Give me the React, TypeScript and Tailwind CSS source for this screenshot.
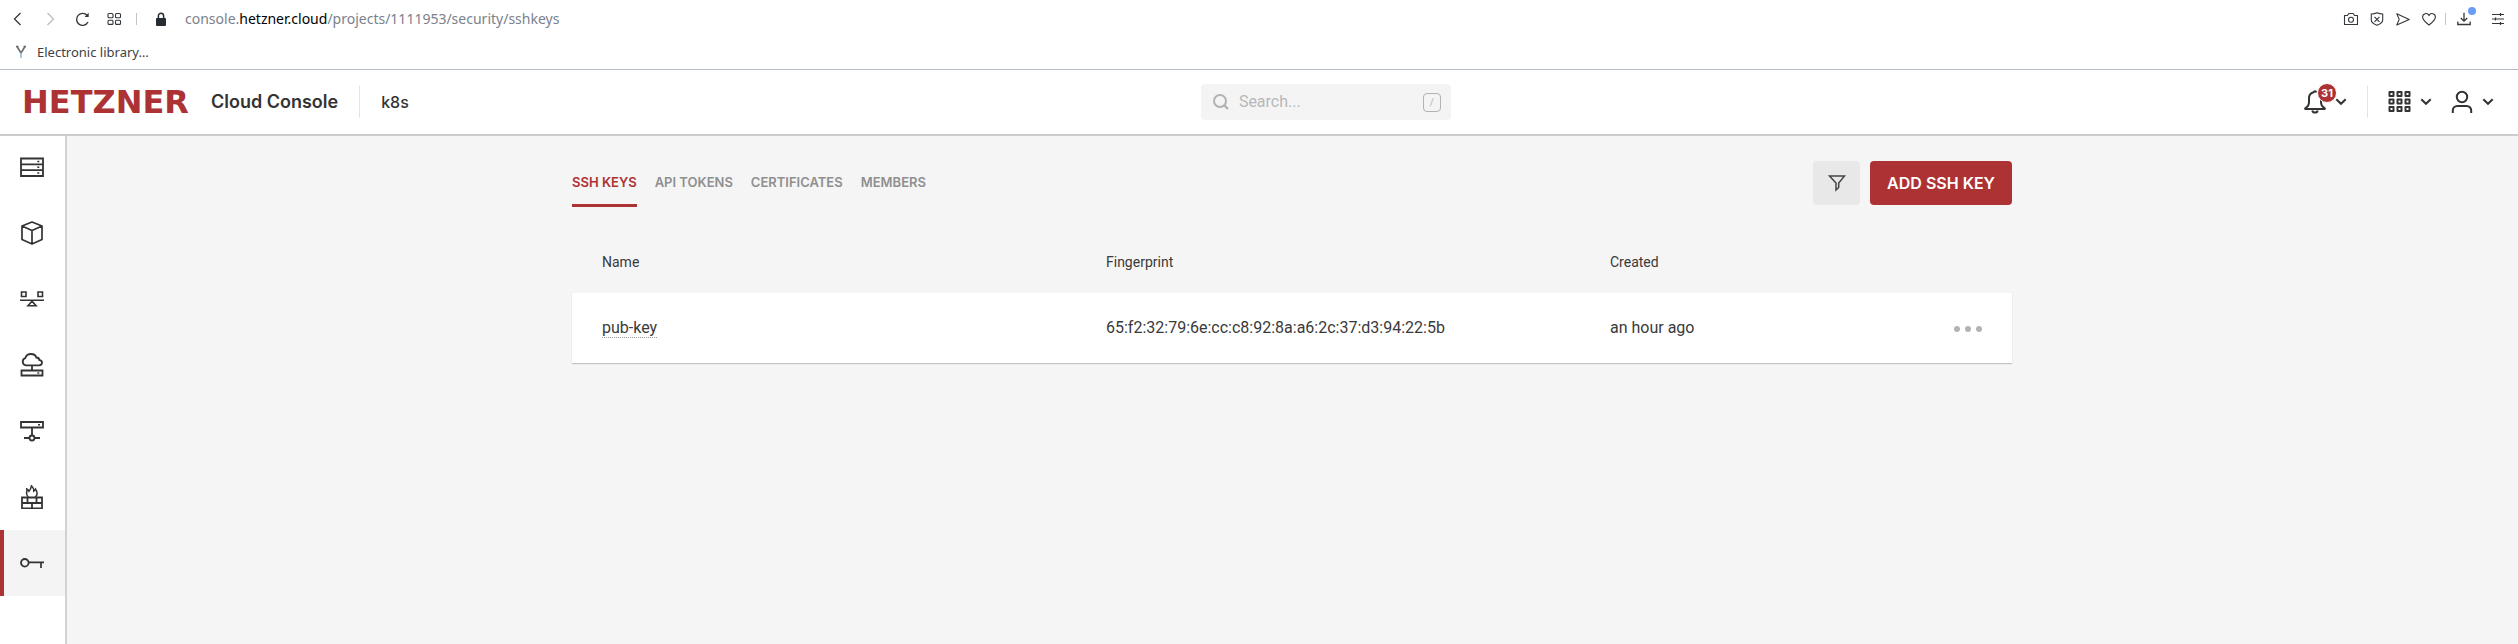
import type { ReactNode } from "react";

const ROBOTO = "font-[Roboto,sans-serif]";

function Icon({ size = 24, label, stroke = 2, children }: { size?: number; label?: string; stroke?: number; children: ReactNode }) {
  return (
    <svg
      width={size}
      height={size}
      viewBox={`0 0 ${size} ${size}`}
      fill="none"
      stroke="currentColor"
      strokeWidth={stroke}
      aria-hidden={label ? undefined : true}
      aria-label={label}
      className="block shrink-0"
    >
      {children}
    </svg>
  );
}

function Chevron() {
  return (
    <Icon size={12}>
      <path d="M1.3 3.2 6 7.8l4.7-4.6" />
    </Icon>
  );
}

function BrowserButton({ label, children, muted }: { label: string; children: ReactNode; muted?: boolean }) {
  return (
    <button type="button" aria-label={label} className={muted ? "text-[#bdbdbd]" : "text-[#33383d]"}>
      {children}
    </button>
  );
}

function BrowserChrome() {
  return (
    <div className="border-b border-[#b5bec8] bg-white font-['Noto_Sans','Open_Sans',sans-serif]">
      <div className="flex h-[38px] items-center justify-between pr-3 pl-[10px]">
        <div className="flex items-center">
          <div className="flex items-center gap-4">
            <BrowserButton label="Back">
              <Icon size={16} stroke={1.3}>
                <path d="M10.5 2 4.5 8l6 6" />
              </Icon>
            </BrowserButton>
            <BrowserButton label="Forward" muted>
              <Icon size={16} stroke={1.3}>
                <path d="m5.500 2 6 6-6 6" />
              </Icon>
            </BrowserButton>
            <BrowserButton label="Reload">
              <Icon size={16} stroke={1.4}>
                <path d="M14 11A6 6 0 1 1 13.200 4.500" />
                <path d="M14.700 1.800v4.200H10.500z" fill="currentColor" stroke="none" />
              </Icon>
            </BrowserButton>
            <BrowserButton label="Tab overview">
              <Icon size={16} stroke={1.1}>
                <rect x="2" y="2.500" width="5" height="4.200" rx="1" />
                <rect x="9.500" y="2.500" width="5" height="4.200" rx="1" />
                <rect x="2" y="9.200" width="5" height="4.200" rx="1" />
                <rect x="9.500" y="9.200" width="5" height="4.200" rx="1" />
              </Icon>
            </BrowserButton>
          </div>
          <span className="ml-[14px] h-3 w-px bg-[#c4c4c4]" />
          <span className="ml-4 text-[#262c33]">
            <Icon size={16}>
              <rect x="3" y="7" width="10" height="8" rx="1" fill="currentColor" stroke="none" />
              <path d="M5.400 8V4.800a2.600 2.600 0 0 1 5.200 0V8" strokeWidth="1.500" />
            </Icon>
          </span>
          <span className="ml-4 text-sm text-[#7b818c]">
            console.<span className="text-black">hetzner.cloud</span>/projects/1111953/security/sshkeys
          </span>
        </div>
        <div className="flex items-center gap-[10px]">
          <BrowserButton label="Snapshot">
            <Icon size={16} stroke={1.1}>
              <path d="M1.500 4.500h3l1.300-2h4.400l1.300 2h3v9h-13z" strokeLinejoin="round" />
              <circle cx="8" cy="8.700" r="2.500" />
            </Icon>
          </BrowserButton>
          <BrowserButton label="Ad blocker">
            <Icon size={16} stroke={1.100}>
              <path d="M8 1.800c2 1 4 1.200 5.700 1.200v6c0 2.300-2.500 4-5.700 5.200C4.800 13 2.300 11.300 2.300 9V3C4 3 6 2.800 8 1.800z" />
              <path d="m5.500 5.800 5 5m0-5-5 5" />
            </Icon>
          </BrowserButton>
          <BrowserButton label="Send">
            <Icon size={16} stroke={1.100}>
              <path d="m1.800 2.800 12.400 5.600L1.800 14l2.400-5.600z" strokeLinejoin="round" />
            </Icon>
          </BrowserButton>
          <BrowserButton label="Favourites">
            <Icon size={16} stroke={1.100}>
              <path d="M8 14C4.500 11.400 1.600 9 1.600 6a3.400 3.400 0 0 1 6.400-1.600A3.400 3.400 0 0 1 14.400 6c0 3-2.900 5.400-6.400 8z" />
            </Icon>
          </BrowserButton>
          <span className="-mx-[2px] h-3 w-px bg-[#c4c4c4]" />
          <span className="relative mr-2 ml-[2px] flex">
            <BrowserButton label="Downloads">
              <Icon size={16} stroke={1.300}>
                <path d="M8 1.800v8M4.800 7 8 10.200 11.200 7M1.800 10.500v3h12.400v-3" />
              </Icon>
            </BrowserButton>
            <span className="absolute -top-1 -right-1 size-2 rounded-full bg-[#6a9bf8]" />
          </span>
          <BrowserButton label="Easy setup">
            <Icon size={16} stroke={1.200}>
              <path d="M2 3.500h12M2 8h12M2 12.500h12M10.500 2v3M5.500 6.500v3M10.500 11v3" />
            </Icon>
          </BrowserButton>
        </div>
      </div>
      <div className="flex h-[31px] items-start pt-1 pl-[13px]">
        <a href="#library" className="flex items-center gap-2 text-[13px] leading-5 text-[#3d4247]">
          <Icon size={16} stroke={1.500}>
            <path d="M4 2.500 8 9l4-6.500M3 2.500h2.500M10.500 2.500H13" stroke="#666" />
            <path d="M8 8.500V14" stroke="#8ab8d6" />
          </Icon>
          Electronic library…
        </a>
      </div>
    </div>
  );
}

function Header() {
  return (
    <header className="relative z-10 flex h-16 items-center justify-between bg-white pr-6 pl-[22px] text-[#333] shadow-[0_2px_0_#cccccc]">
      <div className="flex items-center font-[Inter,sans-serif]">
        <a href="#home" className="flex items-center gap-[22px]">
          <span className="font-['DejaVu_Sans',sans-serif] text-[32px] leading-8 font-bold text-[#ad3234]">HETZNER</span>
          <span className="text-lg font-semibold">Cloud Console</span>
        </a>
        <span className="ml-[21px] h-8 w-px bg-[#e3e3e3]" />
        <a href="#project" className="ml-[21px] text-base font-medium">
          k8s
        </a>
      </div>

      <label className={`flex h-9 w-[250px] items-center rounded bg-[#f4f4f4] pr-[10px] pl-3 text-[#b3b3b3] ${ROBOTO}`}>
        <Icon size={16}>
          <circle cx="7" cy="7" r="6" />
          <path d="m11.300 11.300 3.700 3.700" strokeWidth="2.400" />
        </Icon>
        <input
          type="text"
          aria-label="Search"
          placeholder="Search..."
          className="ml-[10px] min-w-0 flex-1 bg-transparent text-base text-[#333] outline-none placeholder:text-[#b8b8b8]"
        />
        <kbd className={`flex h-[19px] w-[18px] items-center justify-center rounded-[4px] border border-[#b3b3b3] text-[10px] ${ROBOTO}`}>/</kbd>
      </label>

      <div className="flex items-center pl-[60px]">
        <button type="button" aria-label="Notifications, 31 unread" className="relative flex items-center gap-2">
          <Icon>
            <path d="M13.500 2.300a1.600 1.600 0 0 0-3 0c-3 .8-4.500 3-4.500 6v4c0 2.600-1.300 4.600-3.800 6v.7h19.600v-.7c-2.500-1.400-3.800-3.400-3.800-6V9" strokeLinejoin="round" />
            <path d="M9.300 20.500c.3 1.400 1.300 2.100 2.700 2.100s2.400-.7 2.700-2.100" />
          </Icon>
          <Chevron />
          <span className="absolute -top-[7px] left-[14px] flex size-5 items-center justify-center rounded-full border border-white bg-[#ad3234] font-[Inter,sans-serif] text-[11px] font-bold text-white">
            31
          </span>
        </button>
        <span className="ml-5 h-8 w-px bg-[#e3e3e3]" />
        <button type="button" aria-label="Products" className="ml-5 flex items-center gap-2">
          <Icon>
            <path d="M1.500 2h4v4h-4zM9.500 2h4v4h-4zM17.500 2h4v4h-4zM1.500 9.500h4v4h-4zM9.500 9.500h4v4h-4zM17.500 9.500h4v4h-4zM1.500 17h4v4h-4zM9.500 17h4v4h-4zM17.500 17h4v4h-4z" strokeLinejoin="round" />
          </Icon>
          <Chevron />
        </button>
        <button type="button" aria-label="Account" className="ml-[18px] flex items-center gap-2">
          <Icon>
            <circle cx="12" cy="7" r="5.200" />
            <path d="M2.800 23v-2.500a4.500 4.500 0 0 1 4.500-4.500h9.400a4.500 4.500 0 0 1 4.500 4.500V23" />
          </Icon>
          <Chevron />
        </button>
      </div>
    </header>
  );
}

const navItems: { label: string; active?: boolean; icon: ReactNode }[] = [
  {
    label: "Servers",
    icon: (
      <>
        <path d="M1 3.500h22v17.500H1zM1 9.300h22M1 15.200h22" strokeWidth="1.800" />
        <path d="M17.300 6.400h2M17.300 12.200h2M17.300 18.100h2" strokeWidth="1.500" />
      </>
    ),
  },
  {
    label: "Volumes",
    icon: <path d="M12 1 22 5v13.500L12 23 2 18.500V5zM2 5l10 4.500L22 5M12 9.500V23" strokeWidth="1.700" strokeLinejoin="round" />,
  },
  {
    label: "Load balancers",
    icon: (
      <>
        <path d="M1.500 5h4.500v4.500H1.500zM18 5h4.500v4.500H18z" strokeWidth="1.600" />
        <path d="M0 13.200h24M12 14.300 8 18.700h8z" strokeWidth="1.600" />
      </>
    ),
  },
  {
    label: "Floating IPs",
    icon: (
      <>
        <path d="M6 12.300a3.700 3.700 0 0 1-.7-7.200C6 2.500 8 1 11 1c2.800 0 4.700 1.400 5.300 3.500 2 0 2.800.8 2.900 2.400 1.800.4 2.800 1.300 2.800 2.600 0 1.700-1.200 2.800-3 2.800z" strokeWidth="1.800" />
        <path d="M12 12.500V17M1.500 17.500h21v5h-21z" strokeWidth="1.800" />
        <path d="M17.300 20h2" strokeWidth="1.400" />
      </>
    ),
  },
  {
    label: "Networks",
    icon: (
      <>
        <path d="M1 3h22v5.500H1zM12 8.500V16M4 19h5M15 19h5" strokeWidth="1.800" />
        <circle cx="12" cy="19" r="2.500" strokeWidth="1.800" />
        <path d="M18 5.700h2" strokeWidth="1.400" />
      </>
    ),
  },
  {
    label: "Firewalls",
    icon: (
      <>
        <path d="M2 12.500h20v11H2zM2 18h20M7.500 12.500V18M16.500 12.500V18M12 18v5.500" strokeWidth="1.800" />
        <path d="M8.300 12C6.700 10.500 6.200 9 6.700 7c.3-1.300.3-2 .1-3 1.200.6 1.900 1.300 2.200 2.300C10.500 4.500 11 3 11.500.8c1.500 1.500 2.300 3.300 2.300 5.400.8-.5 1.200-1.200 1.600-2.200 1.700 2.500 2.500 6-.2 8" strokeWidth="1.500" />
      </>
    ),
  },
  {
    label: "Security",
    active: true,
    icon: (
      <>
        <circle cx="4.800" cy="11.800" r="3.800" strokeWidth="1.800" />
        <path d="M9 11.300h15M21 11.300v5.700" strokeWidth="1.700" />
      </>
    ),
  },
];

function Sidebar() {
  return (
    <nav aria-label="Project" className="w-[67px] shrink-0 border-r-2 border-[#d2d2d2] bg-white text-[#333]">
      {navItems.map((item) => (
        <a
          key={item.label}
          href={`#${item.label.toLowerCase().replace(" ", "-")}`}
          aria-label={item.label}
          aria-current={item.active ? "page" : undefined}
          className={`flex h-[66px] items-center border-l-4 pl-4 ${item.active ? "border-[#ad3234] bg-[#f4f4f4]" : "border-transparent"}`}
        >
          <Icon>{item.icon}</Icon>
        </a>
      ))}
    </nav>
  );
}

const tabs = ["SSH KEYS", "API TOKENS", "CERTIFICATES", "MEMBERS"];

function Toolbar() {
  return (
    <div className="flex items-start justify-between font-[Inter,sans-serif]">
      <nav aria-label="Security" className="flex gap-[18px] pt-[11px]">
        {tabs.map((tab, i) => (
          <a
            key={tab}
            href={`#${tab.toLowerCase().replace(" ", "-")}`}
            aria-current={i === 0 ? "page" : undefined}
            className={`border-b-[3px] pb-3 text-[13px] leading-5 font-semibold ${
              i === 0 ? "border-[#ad3234] text-[#ad3234]" : "border-transparent text-[#8f8f8f]"
            }`}
          >
            {tab}
          </a>
        ))}
      </nav>
      <div className="flex gap-[10px]">
        <button type="button" aria-label="Filter" className="flex h-11 w-[47px] items-center justify-center rounded bg-[#e8e8e8] text-[#444]">
          <Icon size={18} stroke={1.500}>
            <path d="M1.500 2h15L10.700 9v4.500L8 16V9z" />
          </Icon>
        </button>
        <button type="button" className="h-11 rounded bg-[#ad3234] px-[17px] text-base font-semibold text-white">
          ADD SSH KEY
        </button>
      </div>
    </div>
  );
}

function KeyTable() {
  return (
    <table className={`mt-[35px] w-full table-fixed text-left text-[#3a3a3a] ${ROBOTO}`}>
      <thead>
        <tr className="h-[51px] align-top text-sm leading-10">
          <th className="w-[35%] px-[30px] font-normal">Name</th>
          <th className="w-[35%] px-[30px] font-normal">Fingerprint</th>
          <th className="px-[30px] font-normal">Created</th>
          <th className="w-[100px] font-normal" aria-label="Actions" />
        </tr>
      </thead>
      <tbody>
        <tr className="h-[70px] bg-white text-base shadow-[0_1px_1px_#c4c4c4]">
          <td className="px-[30px]">
            <a href="#pub-key" className="border-b border-dotted border-[#999]">
              pub-key
            </a>
          </td>
          <td className="px-[30px]">65:f2:32:79:6e:cc:c8:92:8a:a6:2c:37:d3:94:22:5b</td>
          <td className="px-[30px]">an hour ago</td>
          <td className="pr-[30px]">
            <button type="button" aria-label="More actions" className="ml-auto flex gap-[5px] pt-[2px]">
              <span className="size-[6px] rounded-full bg-[#b3b3b3]" />
              <span className="size-[6px] rounded-full bg-[#b3b3b3]" />
              <span className="size-[6px] rounded-full bg-[#b3b3b3]" />
            </button>
          </td>
        </tr>
      </tbody>
    </table>
  );
}

export default function App() {
  return (
    <div className="flex min-h-screen flex-col bg-[#f5f5f5]">
      <BrowserChrome />
      <Header />
      <div className="flex flex-1">
        <Sidebar />
        <main className="min-w-0 flex-1 pt-[27px] pr-[25px] pl-6">
          <div className="mx-auto max-w-[1440px]">
            <Toolbar />
            <KeyTable />
          </div>
        </main>
      </div>
    </div>
  );
}
